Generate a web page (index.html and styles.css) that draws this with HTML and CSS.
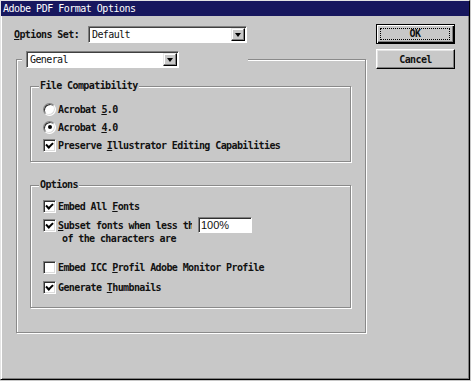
FILE: index.html
```html
<!DOCTYPE html>
<html lang="en">
<head>
    <meta charset="UTF-8">
    <title>Adobe PDF Format Options</title>
    <link rel="stylesheet" href="styles.css">
</head>
<body>
    <div class="window">
        <div class="titlebar">Adobe PDF Format Options</div>
        <div class="content">
            <div class="main">
                <div class="set-row">
                    <span class="set-label"><u>O</u>ptions Set:</span>
                    <div class="combo combo-set">
                        <span class="combo-text">Default</span>
                        <span class="combo-btn"><span class="arrow"></span></span>
                    </div>
                </div>

                <div class="panel">
                    <div class="panel-head">
                        <span class="edge edge-short"></span>
                        <div class="combo combo-page">
                            <span class="combo-text">General</span>
                            <span class="combo-btn"><span class="arrow"></span></span>
                        </div>
                        <span class="edge edge-long"></span>
                    </div>

                    <div class="group group-compat">
                        <div class="group-title">File Compatibility</div>
                        <div class="row row-first"><span class="radio"></span><span>Acrobat <u>5</u>.0</span></div>
                        <div class="row"><span class="radio checked"></span><span>Acrobat <u>4</u>.0</span></div>
                        <div class="row"><span class="check on"></span><span>Preserve <u>I</u>llustrator Editing Capabilities</span></div>
                    </div>

                    <div class="group group-options">
                        <div class="group-title">Options</div>
                        <div class="row row-first"><span class="check on"></span><span>Embed All <u>F</u>onts</span></div>
                        <div class="row row-subset">
                            <span class="check on"></span>
                            <span class="clip"><u>S</u>ubset fonts when less than</span>
                            <span class="num">100%</span>
                        </div>
                        <div class="subline">of the characters are</div>
                        <div class="row row-icc"><span class="check"></span><span>Embed ICC <u>P</u>rofil Adobe Monitor Profile</span></div>
                        <div class="row row-thumb"><span class="check on"></span><span>Generate <u>T</u>humbnails</span></div>
                    </div>
                </div>
            </div>

            <div class="side">
                <button class="btn btn-default"><span class="focus">OK</span></button>
                <button class="btn">Cancel</button>
            </div>
        </div>
    </div>
</body>
</html>
```

FILE: styles.css
```css
html, body {
    margin: 0;
    background: #c8c8c8;
}

body {
    font-family: "DejaVu Sans Mono", "Liberation Mono", monospace;
    font-size: 10px;
    font-weight: bold;
    letter-spacing: -0.6px;
    color: #111;
}

u {
    text-decoration: underline;
    text-decoration-thickness: 1px;
    text-underline-offset: 1px;
}

.window {
    box-sizing: border-box;
    width: 470px;
    height: 380px;
    border: 1px solid;
    border-color: #e4e4e4 #000 #000 #e4e4e4;
    box-shadow: inset 1px 1px 0 #fff, inset -1px -1px 0 #808080;
    background: #c8c8c8;
}

.titlebar {
    height: 15px;
    line-height: 15px;
    padding-left: 2px;
    background: #17175e;
    color: #fff;
    font-weight: normal;
    letter-spacing: -0.5px;
    white-space: nowrap;
}

.content {
    display: flex;
    padding-left: 13px;
}

.main {
    width: 352px;
    display: flex;
    flex-direction: column;
}

.set-row {
    display: flex;
    align-items: center;
    height: 17px;
    margin-top: 10px;
}

.set-label {
    width: 74px;
}

/* dropdowns */
.combo {
    box-sizing: border-box;
    display: flex;
    align-items: stretch;
    height: 17px;
    padding: 1px;
    background: #fff;
    border: 1px solid;
    border-color: #808080 #fff #fff #808080;
    box-shadow: inset 1px 1px 0 #404040;
}

.combo-set {
    width: 159px;
}

.combo-page {
    width: 153px;
    margin-left: 4px;
}

.combo-text {
    flex: 1;
    padding-left: 2px;
    line-height: 13px;
    font-weight: normal;
}

.combo-btn {
    box-sizing: border-box;
    width: 14px;
    display: flex;
    align-items: center;
    justify-content: center;
    background: #c8c8c8;
    border: 1px solid;
    border-color: #e8e8e8 #000 #000 #e8e8e8;
    box-shadow: inset -1px -1px 0 #808080, inset 1px 1px 0 #fff;
}

.arrow {
    width: 0;
    height: 0;
    border-left: 3px solid transparent;
    border-right: 3px solid transparent;
    border-top: 4px solid #000;
}

/* tab panel */
.panel {
    display: flex;
    flex-direction: column;
    width: 350px;
    box-sizing: border-box;
    margin: 16px 0 0 2px;
    padding-bottom: 24px;
    border: 1px solid #8a8a8a;
    border-top: 0;
    box-shadow: 1px 1px 0 #fff, inset 1px 0 0 #fff;
}

.panel-head {
    display: flex;
    height: 17px;
    margin-top: -8px;
}

.edge {
    height: 0;
    margin-top: 8px;
    border-top: 1px solid #8a8a8a;
    border-bottom: 1px solid #fff;
}

.edge-short {
    width: 5px;
}

.edge-long {
    flex: 1;
    margin-left: 69px;
}

/* group boxes */
.group {
    display: flex;
    flex-direction: column;
    margin: 0 14px 0 13px;
    border: 1px solid #8a8a8a;
    box-shadow: 1px 1px 0 #fff, inset 1px 1px 0 #fff;
}

.group-compat {
    margin-top: 18px;
    padding-bottom: 7px;
}

.group-options {
    margin-top: 23px;
    padding-bottom: 11px;
}

.group-title {
    align-self: flex-start;
    margin: -7px 0 0 8px;
    padding: 0 1px;
    line-height: 12px;
    background: #c8c8c8;
}

.row {
    display: flex;
    align-items: center;
    height: 18px;
    padding-left: 12px;
    white-space: nowrap;
}

.group-compat .row-first {
    margin-top: 8px;
}

.group-options .row-first {
    margin-top: 6px;
}

.row-subset {
    margin-top: 1px;
}

.row-icc {
    margin-top: 13px;
}

.row-thumb {
    margin-top: 2px;
}

.subline {
    margin-top: -1px;
    padding-left: 31px;
    line-height: 12px;
}

/* controls */
.radio, .check {
    box-sizing: border-box;
    flex: none;
    width: 13px;
    height: 13px;
    margin-right: 2px;
    background: #fff;
    border: 1px solid;
    border-color: #808080 #fff #fff #808080;
    box-shadow: inset 1px 1px 0 #303030, inset -1px -1px 0 #dcdcdc;
    display: flex;
    align-items: center;
    justify-content: center;
}

.radio {
    border-radius: 50%;
}

.radio.checked::after {
    content: "";
    width: 4px;
    height: 4px;
    border-radius: 50%;
    background: #000;
}

.check.on::after {
    content: "";
    width: 5px;
    height: 3px;
    margin-top: -2px;
    border-left: 2px solid #000;
    border-bottom: 2px solid #000;
    transform: rotate(-45deg);
}

.clip {
    width: 134px;
    overflow: hidden;
}

.num {
    box-sizing: border-box;
    width: 54px;
    height: 16px;
    margin-left: 6px;
    padding-left: 2px;
    background: #fff;
    border: 1px solid;
    border-color: #808080 #fff #fff #808080;
    box-shadow: inset 1px 1px 0 #303030;
    font-family: "Liberation Sans", Arial, sans-serif;
    font-size: 11px;
    font-weight: normal;
    letter-spacing: 0;
    line-height: 14px;
}

/* buttons */
.side {
    display: flex;
    flex-direction: column;
    gap: 5px;
    margin-left: 10px;
    padding-top: 8px;
}

.btn {
    box-sizing: border-box;
    width: 79px;
    height: 20px;
    padding: 0;
    background: #c8c8c8;
    border: 1px solid;
    border-color: #fff #000 #000 #fff;
    box-shadow: inset -1px -1px 0 #808080, inset 1px 1px 0 #e4e4e4;
    font: inherit;
    letter-spacing: inherit;
    color: #111;
}

.btn-default {
    border-color: #000;
    box-shadow: inset 1px 1px 0 #fff, inset -1px -1px 0 #000, inset -2px -2px 0 #808080;
    padding: 3px 4px 3px 3px;
}

.focus {
    display: block;
    height: 100%;
    box-sizing: border-box;
    border: 1px dotted #000;
    line-height: 10px;
}
```
